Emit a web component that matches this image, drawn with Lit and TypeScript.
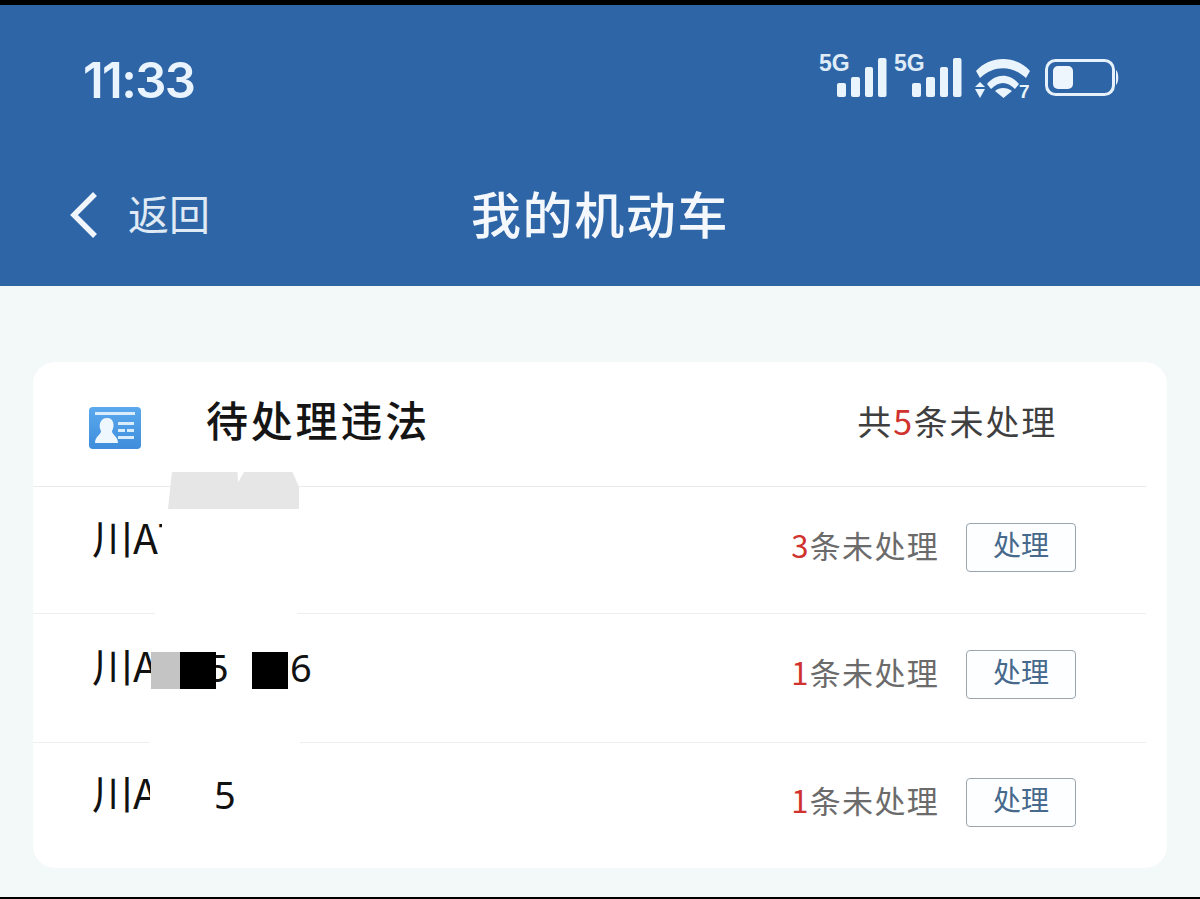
import { LitElement, html, css } from "lit";
import { customElement } from "lit/decorators.js";

const signal = () => html`<svg class="signal" width="68" height="44" viewBox="0 0 68 44">
  <text x="-1" y="14" class="g5">5G</text>
  <rect x="17" y="26" width="9" height="14" rx="2"></rect>
  <rect x="31" y="20" width="9" height="20" rx="2"></rect>
  <rect x="45" y="10" width="8" height="30" rx="2"></rect>
  <rect x="58" y="1" width="8.5" height="39" rx="2"></rect>
</svg>`;

const rows = [
  { count: 3, cls: "r1", plate: html`川A<span class="clipT">T</span>` },
  { count: 1, cls: "r2", plate: html`川A<span class="clip5">5</span><span class="six">6</span>` },
  { count: 1, cls: "r3", plate: html`<span class="clipA">川A</span><span class="five">5</span>` },
];

@customElement("app-root")
export class AppRoot extends LitElement {
  static styles = css`
    :host { display: block; width: 1200px; height: 899px; background: #000; overflow: hidden; font-family: "Noto Sans CJK SC", "Noto Sans", sans-serif; }
    .page { margin-top: 5px; height: 892px; background: #f3f8f9; display: flex; flex-direction: column; }
    .head { height: 281px; flex: none; background: #2d65a6; color: #f0f7fd; display: flex; flex-direction: column; box-sizing: border-box; }
    .status { display: flex; justify-content: space-between; align-items: flex-start; padding: 49px 82px 0 83px; height: 120px; flex: none; box-sizing: border-box; }
    .time { font: 600 49px/54px Inter, "Noto Sans", sans-serif; letter-spacing: -1.6px; color: #e9f4fe; }
    .icons { display: flex; align-items: flex-start; gap: 7px; margin-top: 3px; }
    svg { overflow: visible; display: block; }
    .signal rect, .wifi path, .wifi polygon { fill: #eaf4fc; }
    .g5 { font: 700 23px "Liberation Sans", sans-serif; fill: #dfecf7; }
    .seven { font: 700 19px "Liberation Sans", sans-serif; fill: #eaf4fc; }
    .wifi { margin-left: 5px; }
    .batt { margin-left: 6px; }
    .nav { position: relative; display: flex; align-items: center; justify-content: center; height: 68px; margin-top: 53px; flex: none; }
    .back { position: absolute; left: 68px; top: 0; bottom: 0; display: flex; align-items: center; gap: 28px; font-size: 41px; color: #dfeaf5; }
    .back svg { margin-top: 6px; }
    .title { font-size: 50px; font-weight: 500; letter-spacing: 1.6px; color: #f4f8fc; }
    .card { position: relative; margin: 76px 33px 0; height: 506px; background: #fff; border-radius: 22px; display: flex; flex-direction: column; }
    .ch { height: 124px; flex: none; display: flex; align-items: center; padding: 0 89px 0 56px; border-bottom: 1px solid #e8ebec; margin-right: 21px; }
    .ch svg { margin-top: 8px; }
    .ch .t { margin-left: 65px; font-size: 42px; font-weight: 500; color: #151515; letter-spacing: 2.8px; flex: 1; margin-top: -11px; }
    .ch .s { font-size: 34px; color: #3f3f3f; letter-spacing: 1.8px; margin-top: -8px; }
    .red { color: #d0322e; }
    .row { flex: 1; display: flex; align-items: center; padding: 0 91px 6px 59px; position: relative; }
    .r1 { flex: none; height: 126px; box-sizing: border-box; }
    .r2 { flex: none; height: 129px; box-sizing: border-box; }
    .row + .row::before { content: ""; position: absolute; left: 0; right: 21px; top: 0; height: 1px; background: #ecefef; }
    .plate { flex: 1; font-size: 41px; line-height: 48px; color: #111; margin-top: -23px; display: flex; white-space: nowrap; }
    .r2 .plate, .r3 .plate { margin-top: -19px; }
    .clipT { display: inline-block; width: 4px; overflow: hidden; }
    .clip5 { margin-left: 49px; margin-top: 3px; display: inline-block; width: 21px; overflow: hidden; font: 38px/48px "Noto Sans", sans-serif; }
    .six { margin-left: 62px; margin-top: 3px; font: 38px/48px "Noto Sans", sans-serif; }
    .clipA { display: inline-block; width: 58px; overflow: hidden; }
    .five { margin-left: 64px; margin-top: 3px; font: 38px/48px "Noto Sans", sans-serif; }
    .cnt { font-size: 31px; color: #6b6b6b; letter-spacing: 1.3px; margin-right: 27px; margin-top: -6px; }
    .btn { width: 110px; height: 49px; box-sizing: border-box; border: 1.5px solid #9aa5ad; border-radius: 4px; background: #fdfeff; color: #46698c; font: inherit; font-size: 28px; line-height: 30px; padding: 0 0 7px; }
    .mask { position: absolute; }
    .m1 { left: 135px; top: 110px; width: 131px; height: 37px; background: #e6e6e6; clip-path: polygon(0 100%, 3% 0, 53% 0, 53.5% 28%, 58% 0, 95% 0, 100% 40%, 100% 100%); }
    .m3 { left: 122px; top: 249px; width: 142px; height: 5px; background: #fff; }
    .m4 { left: 118px; top: 290px; width: 29px; height: 37px; background: #c4c4c4; }
    .m5 { left: 147px; top: 290px; width: 36px; height: 37px; background: #000; }
    .m6 { left: 219px; top: 290px; width: 36px; height: 37px; background: #000; }
    .m7 { left: 117px; top: 378px; width: 150px; height: 5px; background: #fff; }
  `;

  render() {
    return html`<div class="page">
      <div class="head">
        <div class="status">
          <div class="time">11:33</div>
          <div class="icons">
            ${signal()}
            ${signal()}
            <svg class="wifi" width="56" height="44" viewBox="0 0 56 44">
              <path d="M1 14 C15 -2 41 -2 55 14 L51 21 C37 8 19 8 5 21 Z"></path>
              <path d="M12 27 C21 16 35 16 44 27 L40 32 C32 24 24 24 16 32 Z"></path>
              <path d="M20 34 C24 30 32 30 37 34 L28.5 41 Z"></path>
              <polygon points="5,25 10,30 0,30"></polygon>
              <polygon points="0,32 10,32 5,41"></polygon>
              <text x="44" y="41" class="seven">7</text>
            </svg>
            <svg class="batt" width="74" height="40" viewBox="0 0 74 40">
              <rect x="2.5" y="3.5" width="67" height="34" rx="9" fill="none" stroke="#e6f1fb" stroke-width="3"></rect>
              <rect x="9" y="9" width="20" height="23" rx="5" fill="#eef6fd"></rect>
              <path d="M72 13 C75 15 75 26 72 28 Z" fill="#e6f1fb"></path>
            </svg>
          </div>
        </div>
        <div class="nav">
          <div class="back">
            <svg width="32" height="50" viewBox="0 0 32 50"><path d="M27 4 L6 25 L27 46" fill="none" stroke="#f0f6fc" stroke-width="5.5"></path></svg>
            <span>返回</span>
          </div>
          <div class="title">我的机动车</div>
        </div>
      </div>
      <div class="card">
        <div class="ch">
          <svg width="52" height="42" viewBox="0 0 52 42">
            <defs><linearGradient id="g" x1="0" y1="0" x2="0" y2="1"><stop offset="0" stop-color="#5aa9ee"></stop><stop offset="1" stop-color="#3f8ddb"></stop></linearGradient></defs>
            <rect width="52" height="42" rx="4" fill="url(#g)"></rect>
            <rect x="6" y="5" width="40" height="3" fill="#d8ecfb"></rect>
            <path d="M18 11 C25 11 26 19 23 24 C23 28 29 29 29 36 L6 36 C6 29 12 28 12 24 C9 19 11 11 18 11 Z" fill="#eef7fe"></path>
            <rect x="29" y="15" width="16" height="3" fill="#d8ecfb"></rect>
            <rect x="29" y="22" width="7" height="3" fill="#d8ecfb"></rect>
            <rect x="38" y="22" width="7" height="3" fill="#d8ecfb"></rect>
            <rect x="29" y="29" width="16" height="3" fill="#d8ecfb"></rect>
          </svg>
          <div class="t">待处理违法</div>
          <div class="s">共<span class="red">5</span>条未处理</div>
        </div>
        ${rows.map(
          (r) => html`<div class="row ${r.cls}">
            <div class="plate">${r.plate}</div>
            <div class="cnt"><span class="red">${r.count}</span>条未处理</div>
            <button class="btn">处理</button>
          </div>`
        )}
        <div class="mask m1"></div>
        <div class="mask m3"></div>
        <div class="mask m4"></div>
        <div class="mask m5"></div>
        <div class="mask m6"></div>
        <div class="mask m7"></div>
      </div>
    </div>`;
  }
}
